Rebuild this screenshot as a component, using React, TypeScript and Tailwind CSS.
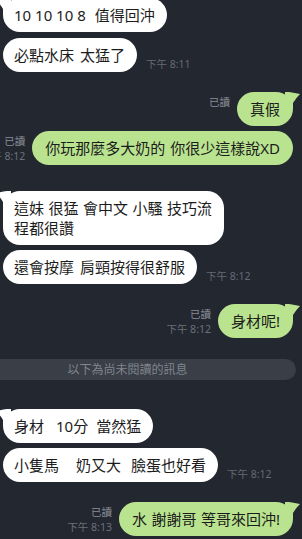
import React from "react";

const FONT = "font-['Noto_Sans','Noto_Sans_CJK_TC',sans-serif]";

function White({
  children,
  first,
  time,
  className,
}: {
  children: React.ReactNode;
  first?: boolean;
  time?: string;
  className?: string;
}) {
  return (
    <div className={"flex items-end " + (className ?? "")}>
      <div className="relative shrink-0 whitespace-nowrap rounded-[17px] bg-white py-[7px] pl-[11px] pr-[12px] text-[15px] leading-[20px] text-[#1c1c1c]">
        {first && (
          <svg className="absolute left-[-7px] top-0" width="15" height="16" viewBox="0 0 15 16">
            <path d="M15 0H11Q5 1 0 2Q4 6 7 11V16H15Z" fill="#ffffff" />
          </svg>
        )}
        <span className="relative">{children}</span>
      </div>
      {time && (
        <span className="mb-[1px] ml-[9px] whitespace-nowrap text-[10.5px] leading-[14px] text-[#656a73]">{time}</span>
      )}
    </div>
  );
}

function Green({
  children,
  first,
  time,
  className,
}: {
  children: React.ReactNode;
  first?: boolean;
  time?: string;
  className?: string;
}) {
  return (
    <div className={"flex items-start justify-end " + (className ?? "")}>
      <div className="mr-[7px] flex shrink-0 flex-col items-end whitespace-nowrap pt-[3px] text-[10.5px] leading-[15px]">
        <span className="text-[#878c95]">已讀</span>
        {time && <span className="text-[#6b7079]">{time}</span>}
      </div>
      <div className="relative shrink-0 whitespace-nowrap rounded-[17px] bg-[#b9e38f] px-[13px] py-[7px] text-[15px] leading-[20px] text-[#1c1c1c]">
        {first && (
          <svg className="absolute right-[-7px] top-0" width="15" height="16" viewBox="0 0 15 16">
            <path d="M0 0H4Q10 1 15 2Q11 6 8 11V16H0Z" fill="#b9e38f" />
          </svg>
        )}
        <span className="relative">{children}</span>
      </div>
    </div>
  );
}

export default function App() {
  return (
    <div className={"h-[539px] w-[302px] overflow-hidden bg-[#232730] pl-[3px] pr-[9px] " + FONT}>
      <div className="flex flex-col">
        <White first className="mt-[-2px]">
          10 10 10 8<span className="inline-block w-[9px]" />值得回沖
        </White>
        <White time="下午 8:11" className="mt-[6px]">
          必點水床<span className="inline-block w-[6px]" />太猛了
        </White>

        <Green first className="mt-[20px]">
          真假
        </Green>
        <Green time="下午 8:12" className="mt-[5px]">
          你玩那麼多大奶的<span className="inline-block w-[5px]" />你很少這樣說XD
        </Green>

        <White first className="mt-[26px]">
          這妹<span className="inline-block w-[4.5px]" />很猛<span className="inline-block w-[4.5px]" />會中文
          <span className="inline-block w-[4.5px]" />小騷<span className="inline-block w-[4.5px]" />技巧流
          <br />
          程都很讚
        </White>
        <White time="下午 8:12" className="mt-[5px]">
          還會按摩<span className="inline-block w-[6px]" />肩頸按得很舒服
        </White>

        <Green first time="下午 8:12" className="mt-[20px]">
          身材呢!
        </Green>

        <div className="ml-[-44px] mr-[-3px] mt-[21px] flex h-[21px] items-center justify-center rounded-full bg-[#393e47] text-[12px] leading-[16px] text-[#80858e]">
          以下為尚未閱讀的訊息
        </div>

        <White first className="mt-[29px]">
          身材<span className="inline-block w-[12px]" />10分<span className="inline-block w-[8px]" />當然猛
        </White>
        <White time="下午 8:12" className="mt-[5px]">
          小隻馬<span className="inline-block w-[17px]" />奶又大<span className="inline-block w-[10px]" />臉蛋也好看
        </White>

        <Green first time="下午 8:13" className="mt-[20px]">
          水<span className="inline-block w-[4.5px]" />謝謝哥<span className="inline-block w-[4.5px]" />等哥來回沖!
        </Green>
      </div>
    </div>
  );
}
